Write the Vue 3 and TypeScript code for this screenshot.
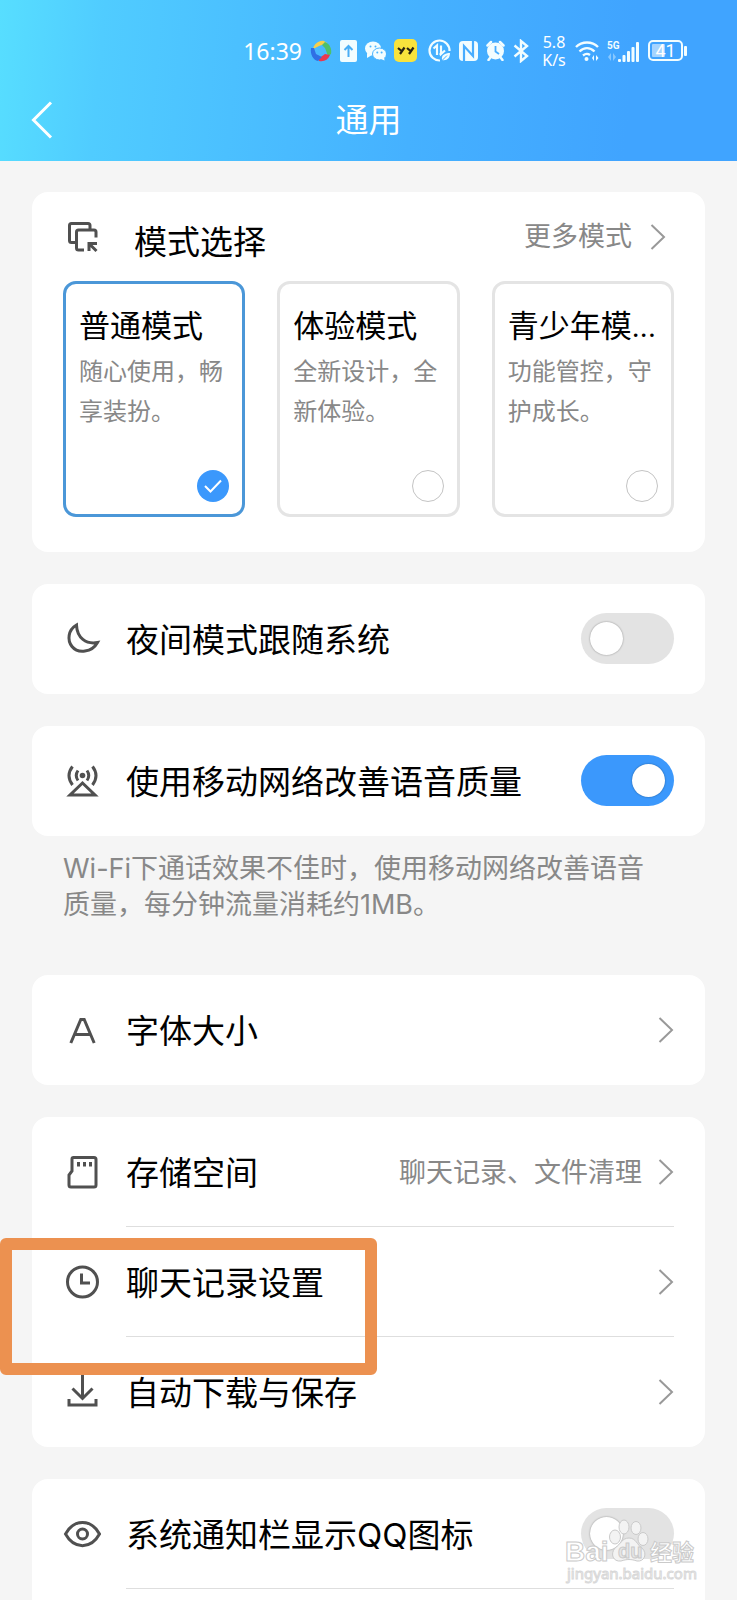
<script setup lang="ts">
import { ref } from 'vue'

interface Mode {
  id: string
  title: string
  desc: string
}

const modes: Mode[] = [
  { id: 'normal', title: '普通模式', desc: '随心使用，畅享装扮。' },
  { id: 'trial', title: '体验模式', desc: '全新设计，全新体验。' },
  { id: 'teen', title: '青少年模...', desc: '功能管控，守护成长。' },
]

const mode = ref('normal')
const followSystem = ref(false)
const improveVoice = ref(true)
const showIcon = ref(false)
</script>

<template>
  <div class="page">
    <header class="top">
      <div class="status">
        <span class="time">16:39</span>
        <svg width="22" height="22" viewBox="0 0 22 22">
          <path d="M3 9C4 4 9 0 14 1L17 3L9 6Z" fill="#f7cf4b" />
          <path d="M15 2C20 4 22 9 21 14L18 16L15 8L12 5Z" fill="#4fc06a" />
          <path d="M20 15C18 20 14 22 9 21L8 19L15 14Z" fill="#e8384f" />
          <path d="M1 8C0 14 3 20 8 21L12 17L6 14L4 8Z" fill="#2f6fe4" />
        </svg>
        <svg width="17" height="22" viewBox="0 0 17 22">
          <rect width="17" height="22" rx="2" fill="#f2fdff" />
          <path d="M8.500 17V6M4.500 10L8.500 6L12.500 10" fill="none" stroke="#49aef5" stroke-width="2" />
        </svg>
        <svg width="21" height="20" viewBox="0 0 21 20">
          <ellipse cx="8" cy="7.500" rx="8" ry="7" fill="#f2fdff" />
          <path d="M2 12L2 17L7 14Z" fill="#f2fdff" />
          <ellipse cx="14.500" cy="13" rx="7" ry="6" fill="#f2fdff" stroke="#49b4ff" />
          <path d="M16 18L19.500 19.500L19 16Z" fill="#f2fdff" />
          <g fill="#49b4ff">
            <circle cx="5.500" cy="5.500" r="1" /><circle cx="10.500" cy="5.500" r="1" />
            <circle cx="12.300" cy="11.500" r="1" /><circle cx="16.600" cy="11.500" r="1" />
          </g>
        </svg>
        <svg width="23" height="23" viewBox="0 0 23 23">
          <rect width="23" height="23" rx="5" fill="#f9e33c" />
          <path d="M4 9L7.500 12M10.500 8.500L6 15M13 9L16.500 12M19.500 8.500L15 15" fill="none" stroke="#2a2413" stroke-width="2.200" />
        </svg>
        <svg class="apart" width="23" height="23" viewBox="0 0 23 23" fill="none" stroke="#f2fdff" stroke-width="2.200">
          <path d="M12 21.500A10 10 0 1 1 21.500 12" />
          <path d="M5.500 9.500L9 6.500V16M13 6.500V15L17 11.500M13 15H11.500" />
          <path d="M14 21C13 16 17 14 22 14C22 19 19 22 14 21Z" fill="#f2fdff" stroke="none" />
          <path d="M14 21.500L19 16.500" stroke="#47b0ff" stroke-width="1" />
        </svg>
        <svg width="19" height="20" viewBox="0 0 19 20">
          <rect width="19" height="20" rx="4" fill="#f2fdff" />
          <path d="M5 20V5L14 15V0" fill="none" stroke="#47adff" stroke-width="2.200" />
        </svg>
        <svg width="19" height="21" viewBox="0 0 19 21">
          <circle cx="9.500" cy="11" r="8.500" fill="#f2fdff" />
          <path d="M1.500 5.500L5 2M17.500 5.500L14 2M4 18L2.500 20M15 18L16.500 20" stroke="#f2fdff" stroke-width="2.500" stroke-linecap="round" />
          <path d="M9.500 6V11.500L13 14" fill="none" stroke="#47adff" stroke-width="1.800" />
        </svg>
        <svg width="16" height="24" viewBox="0 0 16 24" fill="none" stroke="#f2fdff" stroke-width="2.400">
          <path d="M1.500 6.500L14 17L8 22V2L14 7L1.500 17.500" />
        </svg>
        <span class="speed"><span>5.8</span><span>K/s</span></span>
        <svg width="24" height="22" viewBox="0 0 24 22" fill="none" stroke="#f2fdff" stroke-width="2.400">
          <path d="M1 7C7 1 17 1 23 7M4.500 11.500C9 7 15 7 19.500 11.500M8 15.500C10.500 13.500 13 13.500 15 15" />
          <circle cx="11.500" cy="19" r="2" fill="#f2fdff" stroke="none" />
          <path d="M17 18L19 15V21ZM21 15V21L23.500 18Z" fill="#f2fdff" stroke="none" />
        </svg>
        <svg width="33" height="24" viewBox="0 0 33 24" fill="#f2fdff">
          <text class="net" x="0" y="10">5G</text>
          <path d="M1 18L4 14V22ZM6 14V22L9 18Z" opacity=".4" />
          <rect x="11" y="20" width="3" height="3" rx="1" /><rect x="15.500" y="16" width="3" height="7" rx="1" />
          <rect x="20" y="12" width="3" height="11" rx="1" /><rect x="24.500" y="8" width="3" height="15" rx="1" />
          <rect x="29" y="3" width="3" height="20" rx="1" />
        </svg>
        <svg width="39" height="22" viewBox="0 0 39 22">
          <rect x="1" y="1" width="33" height="19" rx="4" fill="none" stroke="#f2fdff" stroke-width="2" />
          <rect x="4" y="4" width="13" height="13" rx="1" fill="#a5d4ff" />
          <rect x="36" y="6" width="3" height="10" rx="1" fill="#f2fdff" />
          <text class="level" x="17.500" y="17" text-anchor="middle">41</text>
        </svg>
      </div>
      <div class="bar">
        <button class="back" type="button" aria-label="返回">
          <svg width="22" height="38" viewBox="0 0 22 38"><path d="M20 1.500L2.500 19L20 36.500" fill="none" stroke="#fff" stroke-width="3" /></svg>
        </button>
        <h1>通用</h1>
      </div>
    </header>

    <main>
      <section class="card modes">
        <div class="modes-head">
          <svg class="icon" viewBox="-1 -1 38 38">
            <path d="M11 23.500H7.500A2 2 0 0 1 5.500 21.500V6.500A2 2 0 0 1 7.500 4.500H24A2 2 0 0 1 26 6.500V10" />
            <path d="M20 31H14.500A2 2 0 0 1 12.500 29V13A2 2 0 0 1 14.500 11H30A2 2 0 0 1 32 13V18.500" />
            <path d="M32.500 32L25.500 25M25 32V24.500H33" />
          </svg>
          <h2>模式选择</h2>
          <a class="more" href="#modes">更多模式
            <svg class="chevron" viewBox="0 0 16 26"><path d="M1.500 1L14 13L1.500 25" /></svg>
          </a>
        </div>
        <div class="tiles">
          <label v-for="m in modes" :key="m.id" class="tile" :class="{ chosen: mode === m.id }">
            <span class="tile-title">{{ m.title }}</span>
            <span class="tile-desc">{{ m.desc }}</span>
            <span class="pick">
              <input v-model="mode" type="radio" name="mode" :value="m.id" />
              <svg v-if="mode === m.id" viewBox="0 0 32 32"><path d="M8 16L13.500 21.500L24 10.500" /></svg>
            </span>
          </label>
        </div>
      </section>

      <section class="card">
        <label class="row">
          <svg class="icon" viewBox="-1 -1 38 38">
            <path d="M12.500 4C4 9 3 19 8 25.500C14 33 28 31.500 33.500 21.500C22 23.500 13 17 12.500 4Z" />
          </svg>
          <span class="body"><span class="name">夜间模式跟随系统</span><input v-model="followSystem" class="switch" type="checkbox" role="switch" /></span>
        </label>
      </section>

      <section class="card">
        <label class="row">
          <svg class="icon" viewBox="-1 -1 38 38">
            <circle class="solid" cx="18.500" cy="12.500" r="2.800" />
            <path d="M14 7.500Q10.500 12.500 14 17.500M23 7.500Q26.500 12.500 23 17.500M8.500 3.500Q1.500 12.500 8.500 22M28.500 3.500Q35.500 12.500 28.500 22M18.500 20L6 32H31Z" />
          </svg>
          <span class="body"><span class="name">使用移动网络改善语音质量</span><input v-model="improveVoice" class="switch" type="checkbox" role="switch" /></span>
        </label>
      </section>
      <p class="note">Wi-Fi下通话效果不佳时，使用移动网络改善语音质量，每分钟流量消耗约1MB。</p>

      <section class="card">
        <a class="row" href="#font">
          <svg class="icon" viewBox="-1 -1 38 38"><path d="M6.800 31L16.800 7.500H20.200L30.200 31M10.500 22.500H26.500" /></svg>
          <span class="body"><span class="name">字体大小</span><svg class="chevron" viewBox="0 0 16 26"><path d="M1.500 1L14 13L1.500 25" /></svg></span>
        </a>
      </section>

      <section class="card">
        <a class="row" href="#storage">
          <svg class="icon" viewBox="-1 -1 38 38">
            <path d="M9.500 3.500H30A2 2 0 0 1 32 5.500V31A2 2 0 0 1 30 33H7A2 2 0 0 1 5 31V21L8 17V5A1.500 1.500 0 0 1 9.500 3.500ZM14.500 8V12.500M20.500 8V12.500M26.500 8V12.500" />
          </svg>
          <span class="body line"><span class="name">存储空间</span><span class="hint">聊天记录、文件清理</span><svg class="chevron" viewBox="0 0 16 26"><path d="M1.500 1L14 13L1.500 25" /></svg></span>
        </a>
        <a class="row marked" href="#history">
          <svg class="icon" viewBox="-1 -1 38 38"><circle cx="18.500" cy="18" r="15" /><path d="M17.500 9.500V19H26" /></svg>
          <span class="body line"><span class="name">聊天记录设置</span><svg class="chevron" viewBox="0 0 16 26"><path d="M1.500 1L14 13L1.500 25" /></svg></span>
        </a>
        <a class="row" href="#download">
          <svg class="icon" viewBox="-1 -1 38 38"><path d="M18.500 1V24M8.500 14.500L18.500 24.500L28.500 14.500M5 25V31H32V25" /></svg>
          <span class="body"><span class="name">自动下载与保存</span><svg class="chevron" viewBox="0 0 16 26"><path d="M1.500 1L14 13L1.500 25" /></svg></span>
        </a>
      </section>

      <section class="card last">
        <label class="row">
          <svg class="icon" viewBox="-1 -1 38 38">
            <path d="M1.500 18C10 2.500 27 2.500 35.500 18C27 33.500 10 33.500 1.500 18Z" /><circle cx="18.500" cy="18" r="5" />
          </svg>
          <span class="body line"><span class="name">系统通知栏显示QQ图标</span><input v-model="showIcon" class="switch" type="checkbox" role="switch" /></span>
        </label>
        <svg class="watermark" width="136" height="72" viewBox="0 0 136 72">
          <g class="paw">
            <ellipse cx="51" cy="23" rx="5.500" ry="7" /><ellipse cx="60" cy="13" rx="5" ry="7" />
            <ellipse cx="72" cy="14" rx="5" ry="6.500" /><ellipse cx="79" cy="25" rx="5" ry="6.500" />
            <path d="M65 24C72 24 73 31 78 34C84 40 80 48 73 47C67 45 63 45 57 47C49 48 46 40 51 34C57 30 58 24 65 24Z" />
          </g>
          <text class="brand" x="1" y="47">Bai</text>
          <text class="brand du" x="54" y="44">du</text>
          <text class="brand cn" x="86" y="46">经验</text>
          <text class="url" x="3" y="65">jingyan.baidu.com</text>
        </svg>
      </section>
    </main>
  </div>
</template>

<style>
body {
  margin: 0;
  background: #f5f5f5;
}
</style>

<style scoped>
*,
*::before,
*::after {
  box-sizing: border-box;
}
.page {
  min-height: 100vh;
  display: flex;
  flex-direction: column;
  overflow: hidden;
  background: #f5f5f5;
  color: #000;
  font-family: Inter, "Noto Sans CJK SC", sans-serif;
}
.top {
  background: linear-gradient(95deg, #57deff 0%, #50ccff 14%, #4bc0ff 32%, #45b1ff 56%, #40a4ff 85%);
  color: #fff;
}
.status {
  display: flex;
  align-items: center;
  justify-content: flex-end;
  gap: 8px;
  height: 101px;
  margin-bottom: -22px;
  padding-right: 50px;
}
.status svg {
  flex: none;
}
.status .apart {
  margin-left: 3px;
}
.time {
  font: 23px/28px "Noto Sans", sans-serif;
}
.speed {
  display: flex;
  flex-direction: column;
  align-items: center;
  width: 26px;
  margin-left: 4px;
  font: 16px/18px "Noto Sans", sans-serif;
}
.net {
  font: bold 10px Roboto, sans-serif;
}
.level {
  font: 18px Roboto, sans-serif;
  fill: #fff;
}
.bar {
  display: grid;
  grid-template-columns: 80px 1fr 80px;
  align-items: center;
  height: 82px;
}
.back {
  display: flex;
  padding: 0 0 0 31px;
  border: 0;
  background: none;
}
h1,
h2 {
  margin: 0;
  font-weight: 400;
}
h1 {
  font-size: 33px;
  line-height: 40px;
  text-align: center;
}
main {
  flex: 1;
  display: flex;
  flex-direction: column;
  gap: 32px;
  padding: 31px 32px 0;
}
.card {
  border-radius: 16px;
  background: #fff;
}
.modes {
  padding: 0 31px 35px;
}
.modes-head {
  display: flex;
  align-items: center;
  height: 89px;
}
h2 {
  flex: 1;
  padding: 10px 0 0 33px;
  font-size: 33px;
  line-height: 40px;
}
.icon {
  flex: none;
  width: 38px;
  height: 38px;
  fill: none;
  stroke: #505050;
  stroke-width: 3;
}
.icon .solid {
  fill: #505050;
  stroke: none;
}
a {
  color: inherit;
  text-decoration: none;
}
.more {
  display: flex;
  align-items: center;
  gap: 18px;
  padding-right: 8px;
  color: #888;
  font-size: 27px;
  line-height: 36px;
}
.chevron {
  flex: none;
  width: 16px;
  height: 26px;
  fill: none;
  stroke: #999;
  stroke-width: 2;
}
.tiles {
  display: grid;
  grid-template-columns: repeat(3, 1fr);
  gap: 32px;
}
.tile {
  display: flex;
  flex-direction: column;
  min-height: 236px;
  padding: 18px 13px 12px;
  border: 3px solid #e4e4e4;
  border-radius: 13px;
}
.tile.chosen {
  border-color: #4b97d8;
}
.tile-title {
  font-family: Roboto, "Noto Sans CJK SC", sans-serif;
  font-size: 31px;
  line-height: 50px;
  white-space: nowrap;
}
.tile-desc {
  color: #888;
  font-size: 24px;
  line-height: 40px;
}
.pick {
  display: grid;
  margin-top: auto;
  align-self: flex-end;
}
.pick > * {
  grid-area: 1 / 1;
  width: 32px;
  height: 32px;
}
.pick input {
  appearance: none;
  margin: 0;
  border: 1px solid #c4c4c4;
  border-radius: 50%;
}
.pick input:checked {
  border: 0;
  background: #3b98fc;
}
.pick svg {
  fill: none;
  stroke: #fff;
  stroke-width: 2;
}
.row {
  position: relative;
  display: flex;
  align-items: center;
  gap: 25px;
  min-height: 110px;
  padding: 0 31px;
}
.body {
  flex: 1;
  align-self: stretch;
  display: flex;
  align-items: center;
  border-bottom: 1px solid transparent;
}
.body.line {
  border-color: #dedede;
}
.name {
  flex: 1;
  padding-top: 2px;
  font-size: 33px;
  line-height: 40px;
  white-space: nowrap;
}
.hint {
  margin-right: 16px;
  padding-top: 2px;
  color: #888;
  font-size: 27px;
  line-height: 36px;
}
.switch {
  appearance: none;
  flex: none;
  display: flex;
  align-items: center;
  width: 93px;
  height: 51px;
  margin: 0;
  padding: 0 9px;
  border-radius: 26px;
  background: #e3e3e3;
}
.switch::before {
  content: "";
  width: 33px;
  height: 33px;
  border-radius: 50%;
  background: #fff;
  box-shadow: 0 0 2px rgba(0, 0, 0, 0.4);
}
.switch:checked {
  justify-content: flex-end;
  background: #3b98fc;
}
.note {
  margin: -32px 0 0;
  padding: 15px 48px 20px 31px;
  color: #888;
  font-size: 27px;
  line-height: 36px;
}
.marked::after {
  content: "";
  position: absolute;
  z-index: 1;
  top: 11px;
  left: -32px;
  width: 377px;
  height: 137px;
  border: 12px solid #ec9150;
  border-radius: 6px;
  pointer-events: none;
}
.last {
  position: relative;
  flex: 1;
  border-radius: 16px 16px 0 0;
}
.watermark {
  position: absolute;
  top: 35px;
  right: 5px;
  fill: #fff;
  stroke: #cacaca;
  stroke-width: 1;
  pointer-events: none;
}
.paw {
  fill: #f3f3f3;
}
.brand {
  font: bold 28px "Liberation Sans", sans-serif;
}
.brand.du {
  font-size: 20px;
  fill: #e6e6e6;
}
.brand.cn {
  font: bold 22px "Noto Sans CJK SC", sans-serif;
}
.url {
  font: 15px "Noto Sans", sans-serif;
  stroke: #d8d8d8;
}
</style>
